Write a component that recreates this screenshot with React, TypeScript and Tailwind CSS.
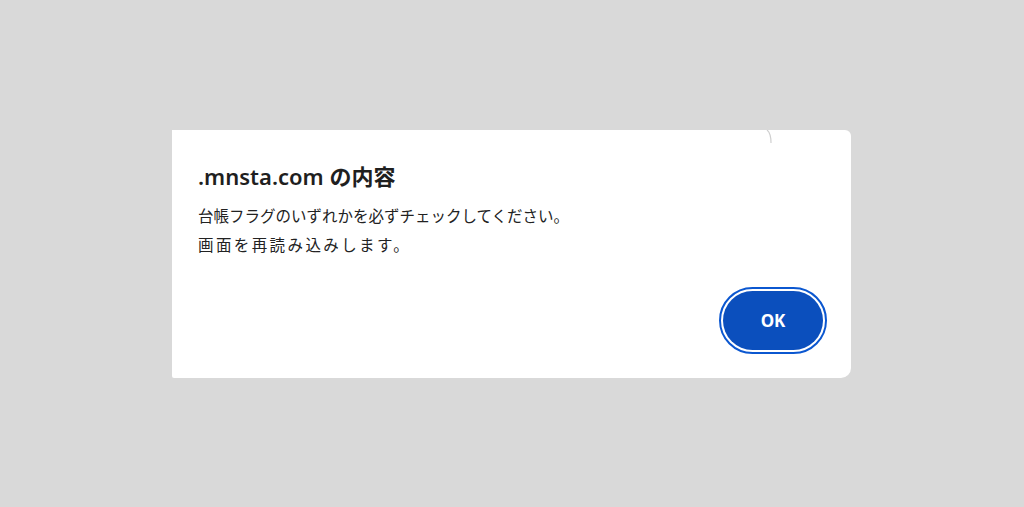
import React from "react";

const FONT = '"Noto Sans", "Noto Sans CJK JP", sans-serif';

export default function App() {
  return (
    <div
      className="h-[507px] w-[1024px] overflow-hidden bg-[#d9d9d9] pl-[172px] pt-[130px]"
      style={{ fontFamily: FONT }}
    >
      <div className="relative flex h-[248px] w-[679px] flex-col rounded-tr-[6px] rounded-br-[10px] rounded-bl-[2px] bg-white pl-[26px] pr-[24px]">
        {/* muesca arriba a la derecha */}
        <svg
          className="absolute left-[594px] top-0"
          width="10"
          height="14"
          viewBox="0 0 10 14"
        >
          <path d="M1 0 Q5 3 5 13" fill="none" stroke="#cfcfcf" strokeWidth="1.2" />
        </svg>

        <h1 className="mt-[31px] text-[22px] font-semibold leading-[30px] text-[#1f1f1f]">
          .mnsta.com の内容
        </h1>
        <div className="mt-[11px] text-[15.5px] leading-[29px] text-[#222]">
          <p>台帳フラグのいずれかを必ずチェックしてください。</p>
          <p className="tracking-[2.4px]">画面を再読み込みします。</p>
        </div>

        <div className="mt-auto mb-[24px] flex justify-end">
          <div className="rounded-full border-[2px] border-[#0b57d0] p-[2px]">
            <button className="flex h-[59px] w-[100px] items-center justify-center rounded-full bg-[#0b4fbd] text-[17px] font-bold text-white">
              OK
            </button>
          </div>
        </div>
      </div>
    </div>
  );
}
